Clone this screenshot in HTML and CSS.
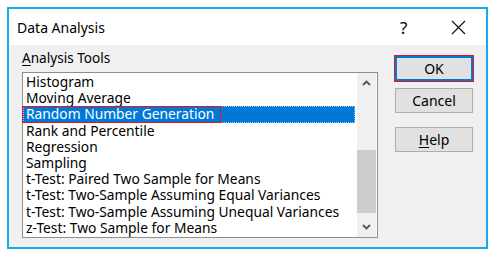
FILE: index.html
```html
<!DOCTYPE html>
<html lang="en">
  <head>
    <meta charset="UTF-8" />
    <title>Data Analysis</title>
    <link rel="stylesheet" href="styles.css">
  </head>
  <body>
    <div class="dialog">
      <div class="titlebar">
        <span class="title">Data Analysis</span>
        <span class="qmark">?</span>
        <span class="close">
          <svg width="15" height="15" viewBox="0 0 15 15">
            <path d="M1 1 L14 14 M14 1 L1 14" stroke="#111" stroke-width="1.2" fill="none" />
          </svg>
        </span>
      </div>
      <div class="body">
        <div class="tools">
          <div class="label"><u>A</u>nalysis Tools</div>
          <div class="listbox">
            <ul class="items">
              <li>Histogram</li>
              <li>Moving Average</li>
              <li class="selected"><span class="mark"></span>Random Number Generation</li>
              <li>Rank and Percentile</li>
              <li>Regression</li>
              <li>Sampling</li>
              <li>t-Test: Paired Two Sample for Means</li>
              <li>t-Test: Two-Sample Assuming Equal Variances</li>
              <li>t-Test: Two-Sample Assuming Unequal Variances</li>
              <li>z-Test: Two Sample for Means</li>
            </ul>
            <div class="scrollbar">
              <div class="arrow">
                <svg width="9" height="6" viewBox="0 0 9 6"><path d="M1 5 L4.5 1.5 L8 5" stroke="#555" stroke-width="1.8" fill="none" /></svg>
              </div>
              <div class="track"><div class="thumb"></div></div>
              <div class="arrow">
                <svg width="9" height="6" viewBox="0 0 9 6"><path d="M1 1 L4.5 4.5 L8 1" stroke="#555" stroke-width="1.8" fill="none" /></svg>
              </div>
            </div>
          </div>
        </div>
        <div class="buttons">
          <button class="btn default">OK</button>
          <button class="btn">Cancel</button>
          <button class="btn help"><u>H</u>elp</button>
        </div>
      </div>
    </div>
  </body>
</html>
```

FILE: styles.css
```css
body {
  margin: 0;
  background: #fff;
  font-family: "Noto Sans", "Open Sans", sans-serif;
  color: #000;
}
.dialog {
  margin: 7px;
  width: 477px;
  height: 238px;
  border: 2px solid #18aae8;
  display: flex;
  flex-direction: column;
}
.titlebar {
  height: 36px;
  background: #fff;
  display: flex;
  align-items: center;
  padding-left: 8px;
  font-size: 14px;
}
.title {
  flex: 1;
}
.qmark {
  font-size: 17px;
  width: 8px;
  margin-right: 43px;
}
.close {
  display: flex;
  margin-right: 20px;
}
.body {
  flex: 1;
  background: #f0f0f0;
  display: flex;
  padding: 4px 13px 0 13px;
}
.tools {
  width: 356px;
}
.label {
  font-size: 13.6px;
  height: 17px;
  line-height: 17px;
  margin-bottom: 6px;
}
.label u,
.btn u {
  text-decoration-thickness: 1px;
  text-underline-offset: 2px;
}
.listbox {
  height: 164px;
  border: 1px solid #8e8e8e;
  background: #fff;
  display: flex;
}
.items {
  list-style: none;
  margin: 0;
  padding: 1px 2px 0 0;
  flex: 1;
  font-size: 13.8px;
}
.items li {
  height: 16.2px;
  line-height: 16.2px;
  padding-left: 3px;
  white-space: nowrap;
  position: relative;
}
.items li.selected {
  background: #0078d7;
  color: #fff;
  outline: 1px dotted #9cc8ee;
  outline-offset: -1px;
}
.mark {
  position: absolute;
  left: -1px;
  top: 0;
  width: 197px;
  height: 15px;
  border: 1px solid #e8141b;
}
.scrollbar {
  width: 19px;
  margin-right: 1px;
  background: #f0f0f0;
  display: flex;
  flex-direction: column;
}
.arrow {
  height: 20px;
  display: flex;
  align-items: center;
  justify-content: center;
}
.track {
  flex: 1;
  padding-top: 57px;
}
.thumb {
  height: 63px;
  background: #cdcdcd;
}
.buttons {
  margin-left: 17px;
  padding-top: 7px;
  display: flex;
  flex-direction: column;
}
.btn {
  width: 78px;
  height: 25px;
  border: 1px solid #adadad;
  background: #e1e1e1;
  font-family: inherit;
  font-size: 14px;
  color: #000;
  padding: 0;
}
.btn.default {
  border: 2px solid #0078d7;
  outline: 1px solid #e8141b;
  margin-bottom: 7px;
}
.btn.help {
  margin-top: 14px;
}
```
